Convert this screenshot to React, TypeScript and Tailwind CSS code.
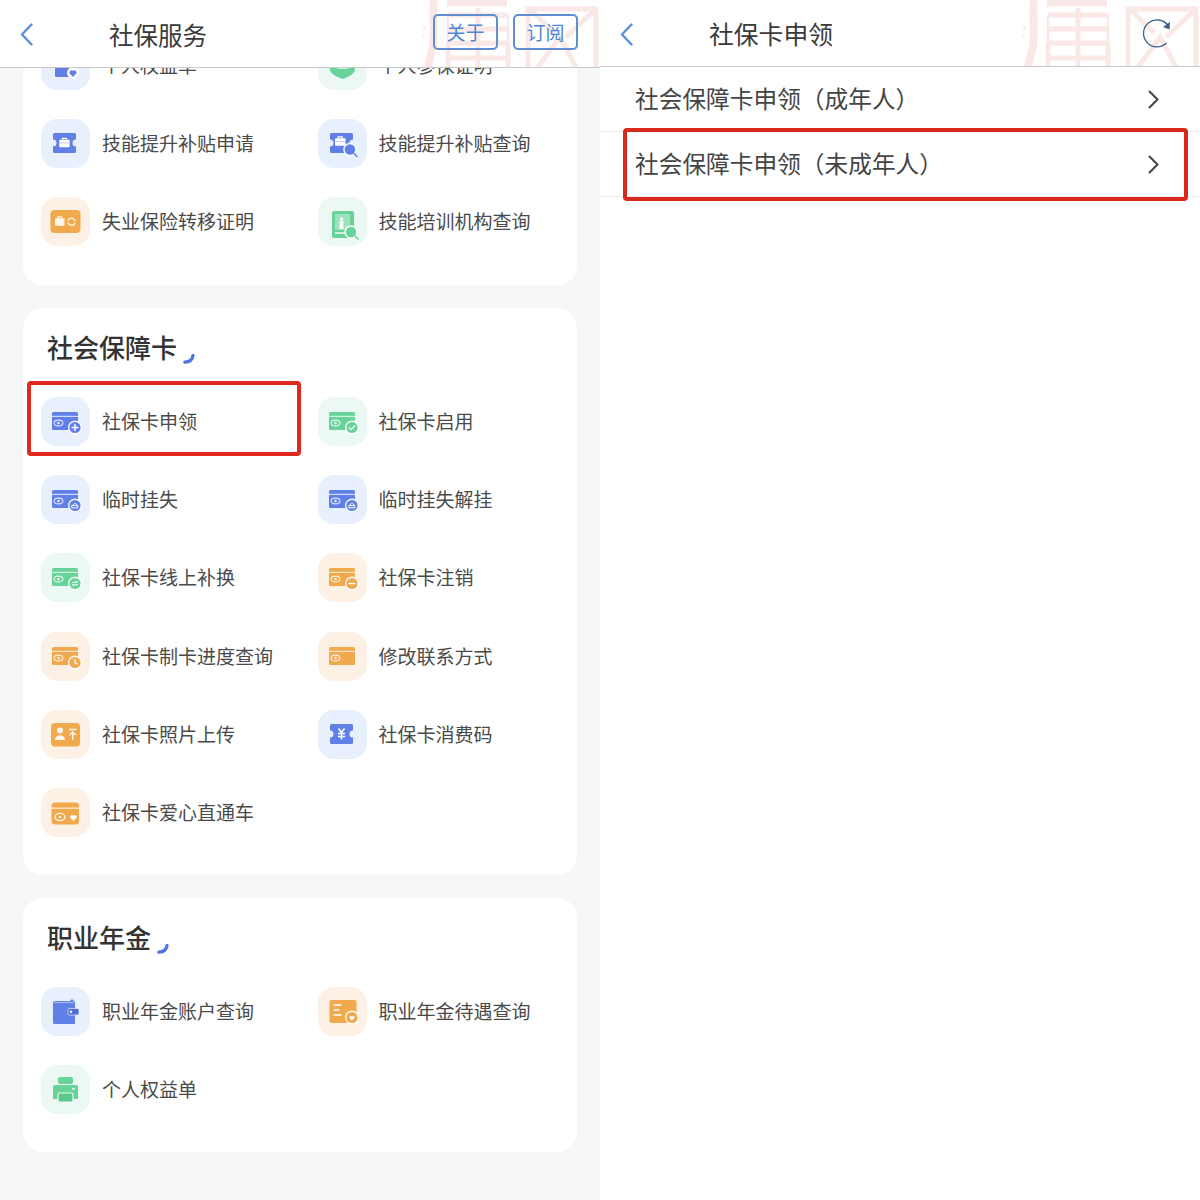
import type { ReactNode } from "react"

const BLUE = "#6080e8"
const GREEN = "#68d398"
const ORANGE = "#f0a94c"

const tileBg = {
  blue: "bg-[#e8f0fe]",
  green: "bg-[#ebf8f3]",
  orange: "bg-[#fdf1e6]",
}

type Tint = keyof typeof tileBg

// every service icon sits in the same rounded tile, drawn on a 49 unit box
const Tile = ({ tint, children }: { tint: Tint; children: ReactNode }) => (
  <div className={`w-[49px] h-[49px] shrink-0 rounded-[16px] ${tileBg[tint]}`}>
    <svg viewBox="0 0 49 49" className="w-[49px] h-[49px]">
      {children}
    </svg>
  </div>
)

// bank card with the eye mark and an optional round badge
const CardIcon = ({ color, badge }: { color: string; badge?: ReactNode }) => (
  <>
    <rect x="11" y="15" width="26" height="18" rx="1.500" fill={color} />
    <rect x="11" y="18.800" width="26" height="1.200" fill="#fff" opacity="0.7" />
    <ellipse cx="17.500" cy="26" rx="4.400" ry="2.900" fill="none" stroke="#fff" strokeWidth="1.100" opacity="0.8" />
    <circle cx="17.500" cy="26" r="1.300" fill="#fff" opacity="0.8" />
    {badge && (
      <>
        <circle cx="34" cy="30.500" r="7" fill="#fff" opacity="0.9" />
        <circle cx="34" cy="30.500" r="5.600" fill={color} />
        {badge}
      </>
    )}
  </>
)

const line = { stroke: "#fff", strokeWidth: 1.300, fill: "none", strokeLinecap: "round" as const }

const Plus = () => <path d="M31.200 30.500h5.600M34 27.700v5.600" {...line} strokeWidth={1.600} />
const Minus = () => <path d="M31.200 30.500h5.600" {...line} strokeWidth={1.600} />
const Check = () => <path d="M31.200 30.600l2 2 3.600-3.800" {...line} />
const Lock = () => (
  <path d="M31.200 32.800h5.600v-2.400h-5.600zM32.200 30.200c0-2.600 3.600-2.600 3.600 0" {...line} strokeWidth={1} />
)
const Swap = () => <path d="M31.500 29.300h5l-1.200-1.100M36.500 31.800h-5l1.200 1.100" {...line} strokeWidth={1} />
const Clock = () => <path d="M34 27.600v3.100l2.200 1.300" {...line} />

const Ticket = ({ color }: { color: string }) => (
  <path
    d="M13.500 14h20a1.500 1.500 0 0 1 1.500 1.500v5a3.500 3.500 0 0 0 0 7v5a1.500 1.500 0 0 1-1.500 1.500h-20a1.500 1.500 0 0 1-1.500-1.500v-5a3.500 3.500 0 0 0 0-7v-5a1.500 1.500 0 0 1 1.500-1.500z"
    fill={color}
  />
)

const Briefcase = ({ x, y }: { x: number; y: number }) => (
  <g transform={`translate(${x} ${y})`}>
    <rect x="0" y="2.200" width="10.500" height="7.600" rx="1" fill="#fff" />
    <path d="M3.200 2.200V.9h4.100v1.300" fill="none" stroke="#fff" strokeWidth="1.100" />
    <path d="M0 5.400h10.500" stroke={BLUE} strokeWidth="0.700" opacity="0.5" />
  </g>
)

const Magnifier = ({ color, cx, cy }: { color: string; cx: number; cy: number }) => (
  <>
    <circle cx={cx} cy={cy} r="6.800" fill="#fff" opacity="0.9" />
    <circle cx={cx} cy={cy} r="5.200" fill={color} />
    <path d={`M${cx + 4} ${cy + 4}l3 3`} stroke={color} strokeWidth="1.600" strokeLinecap="round" />
  </>
)

const icons: Record<string, ReactNode> = {
  rights: (
    <Tile tint="blue">
      <rect x="14" y="17" width="20" height="19" rx="1" fill={BLUE} />
      <circle cx="32" cy="32" r="6" fill="#fff" />
      <path d="M32 36l-3.400-3.600a2.200 2.200 0 0 1 3.400-2.600 2.200 2.200 0 0 1 3.400 2.600z" fill={BLUE} />
    </Tile>
  ),
  proof: (
    <Tile tint="green">
      <path d="M12 12h25v16c0 5-7 8-12.500 10C19 36 12 33 12 28z" fill={GREEN} />
      <rect x="19" y="21" width="11" height="7" rx="1" fill="#fff" opacity="0.7" />
    </Tile>
  ),
  skillApply: (
    <Tile tint="blue">
      <Ticket color={BLUE} />
      <Briefcase x={18.200} y={18.500} />
    </Tile>
  ),
  skillQuery: (
    <Tile tint="blue">
      <Ticket color={BLUE} />
      <Briefcase x={17} y={17} />
      <Magnifier color={BLUE} cx={32} cy={30.500} />
    </Tile>
  ),
  transfer: (
    <Tile tint="orange">
      <rect x="9.500" y="13" width="30" height="23" rx="4" fill={ORANGE} />
      <g transform="translate(14 19)">
        <rect x="0" y="2.200" width="9.500" height="7.600" rx="1" fill="#fff" opacity="0.9" />
        <path d="M2.700 2.200V.9h4.100v1.300" fill="none" stroke="#fff" strokeWidth="1.100" opacity="0.9" />
      </g>
      <path d="M27 23.500a3.400 3.400 0 0 1 6-1l1 1M34 26a3.400 3.400 0 0 1-6 1l-1-1" fill="none" stroke="#fff" strokeWidth="1.300" strokeLinecap="round" opacity="0.9" />
    </Tile>
  ),
  training: (
    <Tile tint="green">
      <rect x="14" y="14" width="22" height="27" rx="2" fill={GREEN} />
      <rect x="17" y="17" width="15" height="16" fill="#fff" opacity="0.35" />
      <rect x="21.500" y="24" width="4" height="8" fill="#fff" opacity="0.9" />
      <circle cx="23.500" cy="22" r="1.800" fill="#fff" opacity="0.9" />
      <path d="M17 36h10" stroke="#fff" strokeWidth="1.300" />
      <Magnifier color={GREEN} cx={33} cy={35} />
    </Tile>
  ),
  cardApply: <Tile tint="blue"><CardIcon color={BLUE} badge={<Plus />} /></Tile>,
  cardEnable: <Tile tint="green"><CardIcon color={GREEN} badge={<Check />} /></Tile>,
  cardLock: <Tile tint="blue"><CardIcon color={BLUE} badge={<Lock />} /></Tile>,
  cardSwap: <Tile tint="green"><CardIcon color={GREEN} badge={<Swap />} /></Tile>,
  cardCancel: <Tile tint="orange"><CardIcon color={ORANGE} badge={<Minus />} /></Tile>,
  cardProgress: <Tile tint="orange"><CardIcon color={ORANGE} badge={<Clock />} /></Tile>,
  cardPlain: <Tile tint="orange"><CardIcon color={ORANGE} /></Tile>,
  photo: (
    <Tile tint="orange">
      <rect x="10" y="13" width="29" height="23.500" rx="4" fill={ORANGE} />
      <circle cx="19" cy="20.500" r="3" fill="#fff" opacity="0.9" />
      <path d="M14 30c0-6.500 10-6.500 10 0z" fill="#fff" opacity="0.9" />
      <path d="M28 19.500h7.500M31.700 30v-7M28.700 25l3-3 3 3" fill="none" stroke="#fff" strokeWidth="1.400" opacity="0.9" />
    </Tile>
  ),
  consume: (
    <Tile tint="blue">
      <Ticket color={BLUE} />
      <path d="M20.500 18.500l3 4 3-4M20 23.500h7M20 26.500h7M23.500 22.500v7" fill="none" stroke="#fff" strokeWidth="1.600" />
    </Tile>
  ),
  love: (
    <Tile tint="orange">
      <rect x="10.500" y="14.500" width="27.500" height="22" rx="3.500" fill={ORANGE} />
      <rect x="10.500" y="19.500" width="27.500" height="1.400" fill="#fff" opacity="0.7" />
      <ellipse cx="19" cy="29" rx="5" ry="3.600" fill="none" stroke="#fff" strokeWidth="1.300" opacity="0.9" />
      <circle cx="19" cy="29" r="1.300" fill="#fff" opacity="0.9" />
      <path d="M32.500 33l-3.200-3.200a1.900 1.900 0 0 1 3.200-2 1.900 1.900 0 0 1 3.200 2z" fill="#fff" />
    </Tile>
  ),
  wallet: (
    <Tile tint="blue">
      <path d="M12 15l2-1h15l2-2 3 3v22H13.500a1.500 1.500 0 0 1-1.500-1.500z" fill={BLUE} />
      <path d="M13 15.500h20" stroke="#fff" strokeWidth="0.800" opacity="0.6" />
      <rect x="27" y="21.500" width="11" height="6.500" rx="1.500" fill="#4f6fd6" stroke="#fff" strokeWidth="0.600" />
      <circle cx="30" cy="24.700" r="1.200" fill="#fff" />
    </Tile>
  ),
  pension: (
    <Tile tint="orange">
      <rect x="11.500" y="13" width="27" height="23" rx="2" fill={ORANGE} />
      <path d="M15.500 18h8M15.500 23h6M15.500 28h8" stroke="#fff" strokeWidth="1.400" />
      <circle cx="34" cy="30.500" r="7" fill="#fff" opacity="0.9" />
      <circle cx="34" cy="30.500" r="5.600" fill={ORANGE} />
      <path d="M34 33.500l-2.500-2.600a1.500 1.500 0 0 1 2.500-1.500 1.500 1.500 0 0 1 2.500 1.500z" fill="#fff" />
    </Tile>
  ),
  printer: (
    <Tile tint="green">
      <rect x="17" y="12" width="15" height="7" rx="2" fill={GREEN} />
      <path d="M12 22a2 2 0 0 1 2-2h21a2 2 0 0 1 2 2v12H12z" fill={GREEN} />
      <rect x="17" y="28" width="15" height="9" rx="1.500" fill="#5cc98c" stroke="#ebf8f3" strokeWidth="1.200" />
      <path d="M31 24h3" stroke="#fff" strokeWidth="1.200" />
    </Tile>
  ),
}

type Service = { icon: string; label: string; marked?: boolean }

const ServiceItem = ({ item }: { item: Service }) => (
  <div className="relative h-[78.33px] flex items-center">
    {icons[item.icon]}
    <span className="ml-3 mb-[2px] text-[19px] leading-none text-[#4a4a4a] whitespace-nowrap">{item.label}</span>
    {item.marked && (
      <div className="absolute left-[-14px] top-[-1px] w-[274px] h-[75px] border-4 border-[#e0281f] rounded-[4px]" />
    )}
  </div>
)

const ServiceGrid = ({ items }: { items: Service[] }) => (
  <div className="grid grid-cols-[276.5px_276.5px] pl-[18px]">
    {items.map((item) => (
      <ServiceItem key={item.label} item={item} />
    ))}
  </div>
)

const SectionTitle = ({ children }: { children: string }) => (
  <div className="h-[74px] pl-6 flex items-start">
    <h2 className="mt-[22px] text-[26px] leading-[34px] font-medium text-[#333]">{children}</h2>
    <svg viewBox="0 0 12 10" className="w-3 h-[10px] ml-[6px] mt-[46px]">
      <path d="M10 1.500C9.500 5.500 6.500 8 1.800 8.200" fill="none" stroke="#4f74dc" strokeWidth="3.200" strokeLinecap="round" />
    </svg>
  </div>
)

// faint red seal behind the page header
const Watermark = () => (
  <svg viewBox="0 0 180 67" className="absolute right-0 top-0 w-[180px] h-[67px]" fill="none" stroke="#f9e8e5" strokeWidth="5">
    <path d="M14 0c-2 12 1 30-1 45l-5 22" strokeWidth="8" />
    <path d="M3 26l3 3M3 36l2 2" strokeWidth="2" />
    <path d="M27 3h60" strokeWidth="7" />
    <path d="M28 15h60M28 29h60M28 43h60M28 58h60M58 8v59M28 43v24M88 43v24" />
    <path d="M28 15v28M88 15v28" strokeWidth="2.500" />
    <path d="M108 67V9h68v58M110 9l24 24M176 9l-30 28M118 67l22-30 16 30" />
  </svg>
)

const BackArrow = () => (
  <svg viewBox="0 0 13 23" className="relative ml-5 w-[13px] h-[23px] shrink-0 mt-[2px]" fill="none">
    <path d="M11.500 1.500L2 11.500l9.500 10" stroke="#5a8fdc" strokeWidth="2.400" strokeLinecap="round" strokeLinejoin="round" />
  </svg>
)

const RowArrow = () => (
  <svg viewBox="0 0 11 19" className="w-[11px] h-[19px] shrink-0" fill="none">
    <path d="M1.500 1.500L9.500 9.500l-8 8" stroke="#444" strokeWidth="2" strokeLinecap="round" strokeLinejoin="round" />
  </svg>
)

const firstCard: Service[] = [
  { icon: "rights", label: "个人权益单" },
  { icon: "proof", label: "个人参保证明" },
  { icon: "skillApply", label: "技能提升补贴申请" },
  { icon: "skillQuery", label: "技能提升补贴查询" },
  { icon: "transfer", label: "失业保险转移证明" },
  { icon: "training", label: "技能培训机构查询" },
]

const cardServices: Service[] = [
  { icon: "cardApply", label: "社保卡申领", marked: true },
  { icon: "cardEnable", label: "社保卡启用" },
  { icon: "cardLock", label: "临时挂失" },
  { icon: "cardLock", label: "临时挂失解挂" },
  { icon: "cardSwap", label: "社保卡线上补换" },
  { icon: "cardCancel", label: "社保卡注销" },
  { icon: "cardProgress", label: "社保卡制卡进度查询" },
  { icon: "cardPlain", label: "修改联系方式" },
  { icon: "photo", label: "社保卡照片上传" },
  { icon: "consume", label: "社保卡消费码" },
  { icon: "love", label: "社保卡爱心直通车" },
]

const pensionServices: Service[] = [
  { icon: "wallet", label: "职业年金账户查询" },
  { icon: "pension", label: "职业年金待遇查询" },
  { icon: "printer", label: "个人权益单" },
]

const applyRows = [
  { label: "社会保障卡申领（成年人）" },
  { label: "社会保障卡申领（未成年人）", marked: true },
]

const App = () => {
  return (
    <div className="w-[1200px] h-[1200px] flex overflow-hidden font-['Noto_Sans_CJK_SC','Noto_Sans',sans-serif]">
      {/* Service list */}
      <section className="w-[600px] h-full flex flex-col bg-[#f7f7f7]">
        <header className="relative z-10 h-[68px] shrink-0 bg-white border-b border-[#c9c9c9] flex items-center overflow-hidden">
          <Watermark />
          <BackArrow />
          <h1 className="relative ml-[76px] mt-1 text-[24.5px] text-[#3a3a3a] font-normal">社保服务</h1>
          <div className="relative ml-auto mr-[22px] mb-[4px] flex gap-[15px]">
            <button className="w-[65px] h-[36px] border-2 border-[#5f8ed3] rounded-[5px] text-[19px] leading-none text-[#4f86d6]">关于</button>
            <button className="w-[65px] h-[36px] border-2 border-[#5f8ed3] rounded-[5px] text-[19px] leading-none text-[#4f86d6]">订阅</button>
          </div>
        </header>
        <main className="flex-1 overflow-hidden">
          <div className="mt-[-42px] px-[23px] flex flex-col gap-[23px]">
            <div className="bg-white rounded-[20px] pb-6">
              <ServiceGrid items={firstCard} />
            </div>
            <div className="bg-white rounded-[20px] pb-[23px]">
              <SectionTitle>社会保障卡</SectionTitle>
              <ServiceGrid items={cardServices} />
            </div>
            <div className="bg-white rounded-[20px] pb-[23px]">
              <SectionTitle>职业年金</SectionTitle>
              <ServiceGrid items={pensionServices} />
            </div>
          </div>
        </main>
      </section>

      {/* Card application */}
      <section className="w-[600px] h-full flex flex-col bg-white">
        <header className="relative z-10 h-[67px] shrink-0 bg-white border-b border-[#c9c9c9] flex items-center overflow-hidden">
          <Watermark />
          <BackArrow />
          <h1 className="relative ml-[76px] mt-[2px] text-[24.8px] text-[#3a3a3a] font-normal">社保卡申领</h1>
          <svg viewBox="0 0 30 30" className="relative ml-auto mr-[28px] w-[30px] h-[30px]" fill="none">
            <path d="M26 7.500A13.500 13.500 0 1 0 24.500 25" stroke="#3f6286" strokeWidth="1.300" />
            <path d="M28 4l-.5 7.500-6.500-2.500z" fill="#3f6286" />
          </svg>
        </header>
        <div>
          {applyRows.map((row) => (
            <div key={row.label} className="relative h-[65px] pl-[35px] pr-[41px] flex items-center justify-between border-b border-[#ececec]">
              <span className="mb-[1px] text-[23.7px] leading-none text-[#444]">{row.label}</span>
              <RowArrow />
              {row.marked && (
                <div className="absolute left-[23px] top-[-4px] w-[565px] h-[73px] border-4 border-[#d9291f] rounded-[4px]" />
              )}
            </div>
          ))}
        </div>
      </section>
    </div>
  )
}

export default App
